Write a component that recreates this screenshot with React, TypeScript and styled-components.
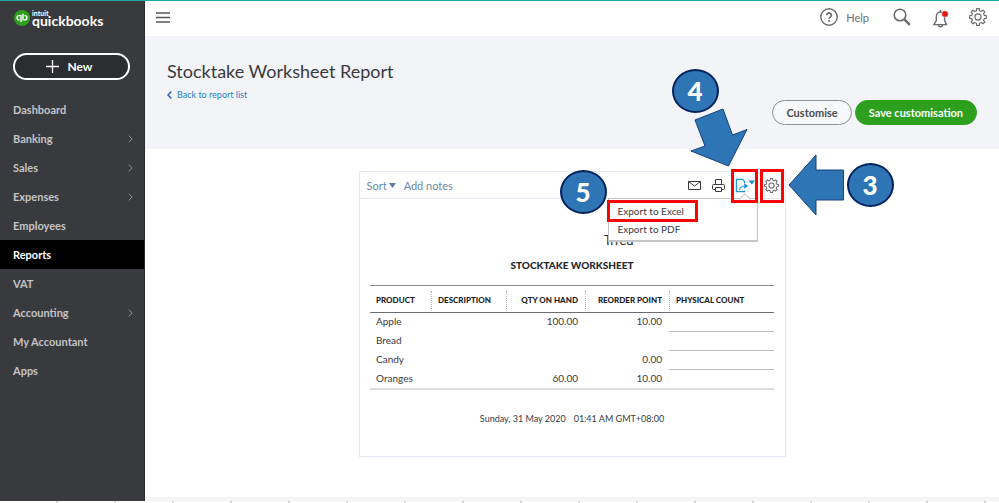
import React from "react";
import styled, { createGlobalStyle } from "styled-components";

const GlobalStyle = createGlobalStyle`
  * { box-sizing: border-box; }
  body { margin: 0; font-family: Lato, "Open Sans", sans-serif; font-size: 11px; color: #393a3d; background: #fff; }
  button { font: inherit; color: inherit; background: none; border: 0; padding: 0; cursor: pointer; }
  a { color: inherit; text-decoration: none; }
  svg { display: block; }
`;

const Page = styled.div`
  display: flex;
  flex-direction: column;
  min-height: 100vh;
  border-top: 1px solid #1fa8a4;
  overflow-x: hidden;
`;

const Shell = styled.div`
  display: flex;
  flex: 1;
`;

const TickStrip = styled.div`
  height: 2px;
  background: repeating-linear-gradient(to right, #fff 0 56px, #d4d5d8 56px 58px);
`;

const Sidebar = styled.aside`
  width: 145px;
  flex: none;
  background: #393a3d;
  border-right: 1px solid #2a2b2d;
  color: #cdced1;
`;

const Brand = styled.a`
  display: flex;
  align-items: center;
  gap: 2px;
  height: 34px;
  margin-left: 14px;
  color: #fff;
`;

const BrandText = styled.span`
  display: flex;
  flex-direction: column;
`;

const BrandSmall = styled.span`
  font-size: 7px;
  line-height: 5px;
  font-weight: 700;
`;

const BrandName = styled.span`
  font-size: 14px;
  line-height: 10px;
  font-weight: 700;
`;

const NewButton = styled.button`
  display: flex;
  align-items: center;
  justify-content: center;
  gap: 8px;
  width: 117px;
  height: 27px;
  margin: 18px 0 15px 13px;
  padding-right: 4px;
  border: 2px solid #fff;
  border-radius: 14px;
  background: #2c2d30;
  color: #fff;
  font-size: 12px;
  font-weight: 700;
`;

const NavItem = styled.a<{ $active?: boolean }>`
  display: flex;
  align-items: center;
  justify-content: space-between;
  height: 29px;
  padding: 0 11px 0 13px;
  font-weight: 700;
  color: ${(p) => (p.$active ? "#fff" : "#c3c4c7")};
  background: ${(p) => (p.$active ? "#000" : "transparent")};
`;

const Main = styled.main`
  display: flex;
  flex-direction: column;
  flex: 1;
  min-width: 0;
`;

const Header = styled.header`
  display: flex;
  align-items: center;
  justify-content: space-between;
  height: 35px;
  padding: 0 12px 3px 11px;
  color: #6b6c72;
`;

const HeaderTools = styled.div`
  display: flex;
  align-items: center;
`;

const HelpButton = styled.button`
  display: flex;
  align-items: center;
  gap: 8px;
  margin-right: 24px;
`;

const SearchButton = styled.button`
  margin-right: 22px;
`;

const BellButton = styled.button`
  margin-right: 20px;
  padding-top: 4px;
`;

const Hero = styled.section`
  display: flex;
  justify-content: space-between;
  height: 113px;
  padding: 24px 22px 24px;
  background: #f3f4f8;
`;

const Title = styled.h1`
  margin: 0;
  font-size: 18px;
  line-height: 22px;
  font-weight: 400;
`;

const BackLink = styled.a`
  display: flex;
  align-items: center;
  gap: 5px;
  margin-top: 7px;
  font-size: 9px;
  line-height: 12px;
  color: #1f7fc6;
`;

const HeroActions = styled.div`
  display: flex;
  align-items: flex-end;
  gap: 3px;
`;

const PillButton = styled.button<{ $primary?: boolean }>`
  height: 25px;
  padding: 0 13px;
  border: 1px solid ${(p) => (p.$primary ? "#2ca01c" : "#8d9096")};
  border-radius: 13px;
  background: ${(p) => (p.$primary ? "#2ca01c" : "#f7f8fa")};
  color: ${(p) => (p.$primary ? "#fff" : "#4c4d52")};
  font-weight: 700;
`;

const Canvas = styled.section`
  flex: 1;
  padding: 22px 0 36px;
  border-bottom: 4px solid #f3f4f8;
`;

const Card = styled.article`
  position: relative;
  width: 50%;
  min-width: 420px;
  margin: 0 auto;
  border: 1px solid #e3e9f2;
`;

const Toolbar = styled.div`
  display: flex;
  align-items: center;
  justify-content: space-between;
  height: 27px;
  padding: 0 1px 0 7px;
  border-bottom: 1px solid #e3e9f2;
  color: #6b87a8;
`;

const ToolGroup = styled.div`
  display: flex;
  align-items: center;
  height: 100%;
`;

const TextTool = styled.button`
  display: flex;
  align-items: center;
  gap: 2px;
  margin-right: 8px;
`;

const IconTool = styled.button`
  display: flex;
  align-items: center;
  justify-content: center;
  width: 24px;
  height: 100%;
`;

const BoxedTool = styled(IconTool)<{ $width: number }>`
  position: relative;
  width: ${(p) => p.$width}px;
  & + & {
    margin-left: 2px;
  }
  &::after {
    content: "";
    position: absolute;
    inset: -3px 0 -5px;
    border: 3px solid #f80606;
    z-index: 3;
  }
`;

const Menu = styled.div`
  position: absolute;
  z-index: 2;
  top: 26px;
  right: 27px;
  width: 150px;
  padding: 3px 0 2px;
  background: #fff;
  border: 1px solid #c4c5c8;
  border-bottom-width: 2px;
`;

const MenuCaret = styled.svg`
  position: absolute;
  top: -6px;
  right: 6px;
`;

const MenuItem = styled.button<{ $boxed?: boolean }>`
  display: block;
  position: relative;
  width: 100%;
  height: 18px;
  padding-left: 9px;
  font-size: 10px;
  text-align: left;
  &::after {
    content: "";
    display: ${(p) => (p.$boxed ? "block" : "none")};
    position: absolute;
    inset: -2px 59px -2px -2px;
    border: 3px solid #f80606;
  }
`;

const ReportBody = styled.div`
  display: flex;
  flex-direction: column;
  align-items: center;
  padding: 33px 11px 29px;
`;

const ReportHeading = styled.header`
  margin-bottom: 13px;
  color: #26272a;
`;

const Company = styled.div`
  font-size: 13px;
  line-height: 16px;
  text-align: right;
`;

const ReportName = styled.h2`
  margin: 10px 0 0;
  font-size: 10px;
  line-height: 14px;
  font-weight: 900;
`;

const ReportTable = styled.table`
  width: 100%;
  table-layout: fixed;
  border-collapse: collapse;
  border-top: 1px solid #8a8b8e;
  border-bottom: 2px solid #dcdcde;
`;

const HeadCell = styled.th<{ $right?: boolean }>`
  padding: 5px 0 3px;
  border-bottom: 1px solid #6b6c72;
  font-size: 8px;
  line-height: 18px;
  font-weight: 900;
  color: #1c1d1f;
  white-space: nowrap;
  text-align: ${(p) => (p.$right ? "right" : "left")};
`;

const HeadLabel = styled.span<{ $divider?: boolean }>`
  display: block;
  padding: 0 7px 0 6px;
  border-left: ${(p) => (p.$divider ? "1px dotted #b4b5b9" : "0")};
`;

const Cell = styled.td<{ $right?: boolean }>`
  height: 19px;
  padding: 0 7px 1px 6px;
  font-size: 10px;
  line-height: 17px;
  text-align: ${(p) => (p.$right ? "right" : "left")};
`;

const CountCell = styled(Cell)`
  border-bottom: 1px solid #bdbec2;
`;

const Stamp = styled.footer`
  display: flex;
  gap: 8px;
  margin-top: 21px;
  font-size: 9px;
  line-height: 16px;
`;

const StepBadge = styled.span<{ $top: number; $right: number }>`
  position: absolute;
  z-index: 4;
  top: ${(p) => p.$top}px;
  right: ${(p) => p.$right}px;
  display: flex;
  align-items: center;
  justify-content: center;
  width: 47px;
  height: 44px;
  border: 2px solid #04225f;
  border-radius: 50%;
  background: #2e75b6;
  color: #fff;
  font-size: 26px;
  line-height: 30px;
  font-weight: 900;
`;

const StepArrow = styled.svg<{ $top: number; $right: number }>`
  position: absolute;
  z-index: 4;
  top: ${(p) => p.$top}px;
  right: ${(p) => p.$right}px;
  fill: #2e75b6;
  stroke: #17407c;
`;

const teeth = 8;
const gearPath = (() => {
  const points: string[] = [];
  const step = (Math.PI * 2) / teeth;
  for (let i = 0; i < teeth; i++) {
    [
      [-0.32, 7.2],
      [-0.2, 9.4],
      [0.2, 9.4],
      [0.32, 7.2],
    ].forEach(([turn, radius]) => {
      const angle = i * step + turn * step;
      points.push(`${(10 + radius * Math.sin(angle)).toFixed(2)} ${(10 - radius * Math.cos(angle)).toFixed(2)}`);
    });
  }
  return `M${points.join("L")}Z`;
})();

const GearIcon = ({ size, weight }: { size: number; weight: number }) => (
  <svg width={size} height={size} viewBox="0 0 20 20" fill="none" stroke="#6b6c72" strokeWidth={weight} strokeLinejoin="round" aria-hidden>
    <path d={gearPath} />
    <circle cx="10" cy="10" r="3.4" />
  </svg>
);

const Chevron = () => (
  <svg width="5" height="8" viewBox="0 0 5 8" fill="none" stroke="#8d9096" aria-hidden>
    <path d="M.7 .7 4.2 4 .7 7.3" />
  </svg>
);

const Caret = ({ color }: { color: string }) => (
  <svg width="7" height="5" viewBox="0 0 7 5" fill={color} aria-hidden>
    <path d="M0 0h7L3.5 5z" />
  </svg>
);

const nav = [
  { label: "Dashboard" },
  { label: "Banking", more: true },
  { label: "Sales", more: true },
  { label: "Expenses", more: true },
  { label: "Employees" },
  { label: "Reports", active: true },
  { label: "VAT" },
  { label: "Accounting", more: true },
  { label: "My Accountant" },
  { label: "Apps" },
];

const columns = [
  { label: "PRODUCT", width: "61", right: false },
  { label: "DESCRIPTION", width: "75", right: false },
  { label: "QTY ON HAND", width: "79", right: true },
  { label: "REORDER POINT", width: "84", right: true },
  { label: "PHYSICAL COUNT", width: "105", right: false },
];

const rows = [
  ["Apple", "100.00", "10.00"],
  ["Bread", "", ""],
  ["Candy", "", "0.00"],
  ["Oranges", "60.00", "10.00"],
];

export default function App() {
  return (
    <>
      <GlobalStyle />
      <Page>
        <Shell>
          <Sidebar>
            <Brand href="#">
              <svg width="16" height="16" viewBox="0 0 16 16" fill="none" stroke="#fff" strokeWidth="1.4" aria-hidden>
                <circle cx="8" cy="8" r="8" fill="#2ca01c" stroke="none" />
                <path d="M7 12V5.6H5.2a2.1 2.1 0 0 0 0 4.3h.4M9 3.8v6.1h1.8a2.1 2.1 0 0 0 0-4.3h-.4" />
              </svg>
              <BrandText>
                <BrandSmall>intuit</BrandSmall>
                <BrandName>quickbooks</BrandName>
              </BrandText>
            </Brand>
            <NewButton type="button">
              <svg width="13" height="13" viewBox="0 0 13 13" stroke="#fff" strokeWidth="1.3" aria-hidden>
                <path d="M6.5 0v13M0 6.5h13" />
              </svg>
              New
            </NewButton>
            <nav>
              {nav.map((item) => (
                <NavItem key={item.label} href="#" $active={item.active}>
                  {item.label}
                  {item.more && <Chevron />}
                </NavItem>
              ))}
            </nav>
          </Sidebar>

          <Main>
            <Header>
              <button type="button" aria-label="Toggle menu">
                <svg width="14" height="11" viewBox="0 0 14 11" stroke="#55565b" strokeWidth="1.4" aria-hidden>
                  <path d="M0 1h14M0 5.5h14M0 10h14" />
                </svg>
              </button>
              <HeaderTools>
                <HelpButton type="button">
                  <svg width="18" height="18" viewBox="0 0 18 18" fill="none" stroke="#6b6c72" strokeWidth="1.4" aria-hidden>
                    <circle cx="9" cy="9" r="8.2" />
                    <path d="M6.7 7.2a2.3 2.3 0 1 1 3.6 1.9c-.9.6-1.3.9-1.3 1.7" strokeWidth="1.7" />
                    <path d="M9 12v1.7" strokeWidth="1.7" />
                  </svg>
                  Help
                </HelpButton>
                <SearchButton type="button" aria-label="Search">
                  <svg width="18" height="18" viewBox="0 0 18 18" fill="none" stroke="#6b6c72" aria-hidden>
                    <circle cx="7" cy="7" r="5.8" strokeWidth="1.6" />
                    <path d="M11.2 11.2l5.6 5.6" strokeWidth="2.4" />
                  </svg>
                </SearchButton>
                <BellButton type="button" aria-label="Notifications">
                  <svg width="16" height="18" viewBox="0 0 16 18" fill="none" stroke="#6b6c72" strokeWidth="1.4" aria-hidden>
                    <path d="M7.5 2C4.6 2 3.3 4.3 3.3 7v3.5L.9 14.6h12.6l-1.9-4.1V7c0-2.7-1.2-5-4.1-5zM7.5 2V0" />
                    <path d="M5.5 14.8a2 2 0 0 0 4 0" />
                    <circle cx="12" cy="4" r="3.3" fill="#e01b12" stroke="#fff" strokeWidth="0.5" />
                  </svg>
                </BellButton>
                <button type="button" aria-label="Settings">
                  <GearIcon size={18} weight={1.3} />
                </button>
              </HeaderTools>
            </Header>

            <Hero>
              <div>
                <Title>Stocktake Worksheet Report</Title>
                <BackLink href="#">
                  <svg width="5" height="8" viewBox="0 0 5 8" fill="none" stroke="#2f5fb8" strokeWidth="1.5" aria-hidden>
                    <path d="M4.3 .6 1 4l3.3 3.4" />
                  </svg>
                  Back to report list
                </BackLink>
              </div>
              <HeroActions>
                <PillButton type="button">Customise</PillButton>
                <PillButton type="button" $primary>
                  Save customisation
                </PillButton>
              </HeroActions>
            </Hero>

            <Canvas>
              <Card>
                <Toolbar>
                  <ToolGroup>
                    <TextTool type="button">
                      Sort <Caret color="#5b7ba3" />
                    </TextTool>
                    <TextTool type="button">Add notes</TextTool>
                  </ToolGroup>
                  <ToolGroup>
                    <IconTool type="button" aria-label="Email">
                      <svg width="13" height="9" viewBox="0 0 13 9" fill="none" stroke="#393a3d" aria-hidden>
                        <path d="M.5 .5h12v8H.5zM.5 .5l6 4.5 6-4.5" />
                      </svg>
                    </IconTool>
                    <IconTool type="button" aria-label="Print">
                      <svg width="13" height="13" viewBox="0 0 13 13" fill="none" stroke="#393a3d" aria-hidden>
                        <path d="M3.5 5.5v-5h6v5M3.5 10.5h-2a1 1 0 0 1-1-1v-3a1 1 0 0 1 1-1h10a1 1 0 0 1 1 1v3a1 1 0 0 1-1 1h-2M3.5 8.5h6v4h-6z" />
                      </svg>
                    </IconTool>
                    <BoxedTool type="button" $width={27} aria-label="Export">
                      <svg width="21" height="15" viewBox="0 0 21 15" fill="none" stroke="#1a9bd7" strokeWidth="1.2" aria-hidden>
                        <path d="M10.500 5V3.500L8.500 1.400H2.400v12.200h8.100V12.500" />
                        <path d="M5.500 12C6 9 8 8 11 8" />
                        <path d="M10.200 5 14.200 8 10.200 11z" fill="#1a9bd7" stroke="none" />
                        <path d="M14.500 2.500H21l-3.200 4z" fill="#0f8fce" stroke="none" />
                      </svg>
                    </BoxedTool>
                    <BoxedTool type="button" $width={24} aria-label="Report settings">
                      <GearIcon size={15} weight={1.4} />
                    </BoxedTool>
                  </ToolGroup>
                </Toolbar>

                <Menu>
                  <MenuCaret width="12" height="7" viewBox="0 0 12 7" fill="#fff" stroke="#b4b5b9" aria-hidden>
                    <path d="M0 6.5 6 .7l6 5.8" />
                  </MenuCaret>
                  <MenuItem type="button" $boxed>
                    Export to Excel
                  </MenuItem>
                  <MenuItem type="button">Export to PDF</MenuItem>
                </Menu>

                <ReportBody>
                  <ReportHeading>
                    <Company>Trred</Company>
                    <ReportName>STOCKTAKE WORKSHEET</ReportName>
                  </ReportHeading>
                  <ReportTable>
                    <colgroup>
                      {columns.map((c) => (
                        <col key={c.label} width={c.width} />
                      ))}
                    </colgroup>
                    <thead>
                      <tr>
                        {columns.map((c, i) => (
                          <HeadCell key={c.label} scope="col" $right={c.right}>
                            <HeadLabel $divider={i > 0}>{c.label}</HeadLabel>
                          </HeadCell>
                        ))}
                      </tr>
                    </thead>
                    <tbody>
                      {rows.map(([product, quantity, reorder]) => (
                        <tr key={product}>
                          <Cell>{product}</Cell>
                          <Cell />
                          <Cell $right>{quantity}</Cell>
                          <Cell $right>{reorder}</Cell>
                          <CountCell />
                        </tr>
                      ))}
                    </tbody>
                  </ReportTable>
                  <Stamp>
                    <span>Sunday, 31 May 2020</span>
                    <span>01:41 AM GMT+08:00</span>
                  </Stamp>
                </ReportBody>

                <StepArrow $top={-64} $right={37} width="58" height="59" viewBox="0 0 58 59" aria-hidden>
                  <path d="M33 1 42.5 27 57 21.5 38.5 58 1 43 15 38 5 12z" />
                </StepArrow>
                <StepArrow $top={-18} $right={-59} width="56" height="62" viewBox="0 0 56 62" aria-hidden>
                  <path d="M1 31 28 1V16H55.5V46H28V61z" />
                </StepArrow>
                <StepBadge $top={-103} $right={66}>4</StepBadge>
                <StepBadge $top={-9} $right={-109}>3</StepBadge>
                <StepBadge $top={-2} $right={178}>5</StepBadge>
              </Card>
            </Canvas>
          </Main>
        </Shell>
        <TickStrip />
      </Page>
    </>
  );
}
